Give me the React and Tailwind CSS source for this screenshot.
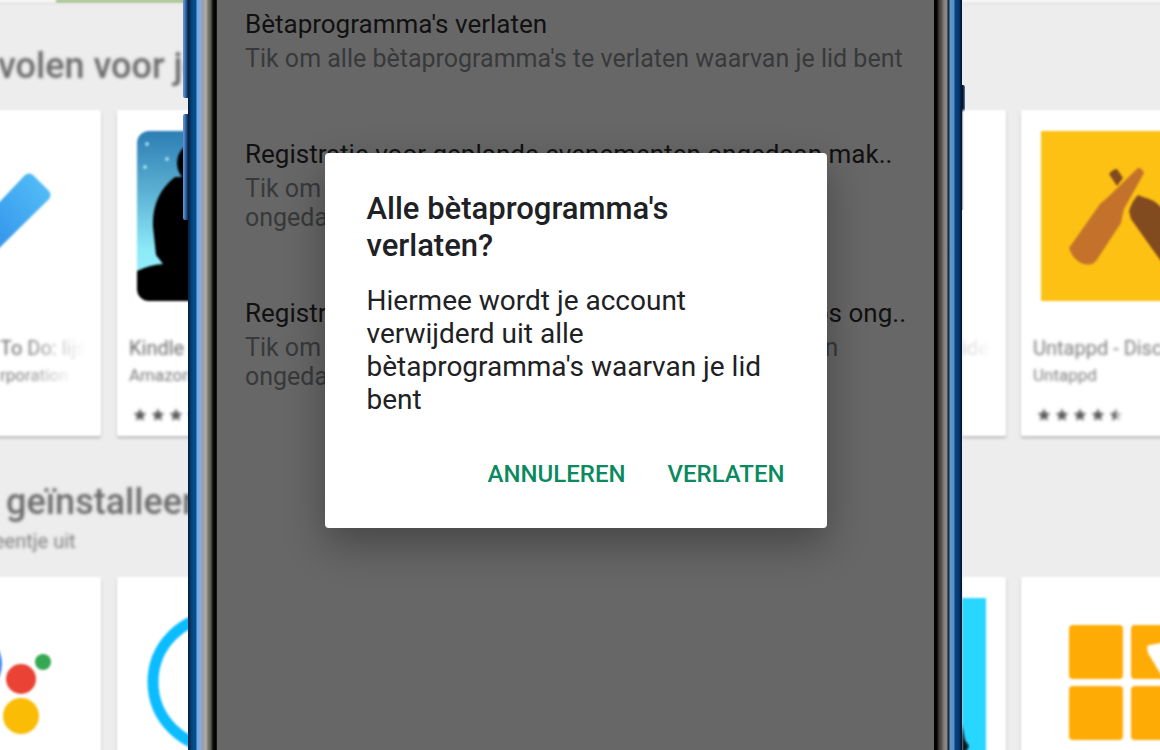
import React, { useState } from 'react';

const settings = [
  {
    id: 'beta',
    title: ["Bètaprogramma's verlaten"],
    text: [["Tik om alle bètaprogramma's te verlaten waarvan je lid bent"]],
  },
  {
    id: 'events',
    title: ['Registratie voor geplande evenementen ongedaan mak..'],
    text: [['Tik om alle registraties'], ['ongedaan te maken']],
  },
  {
    id: 'apps',
    title: ['Registratie', 'apps ong..'],
    text: [['Tik om je registratie voor automatische installaties en'], ['ongedaan te maken']],
  },
];

const Star = ({ half }) => (
  <svg viewBox="0 0 24 24" className="w-3.5 h-3.5" fill="#5c5c5c">
    {half ? (
      <>
        <path d="M12 1 8.7 8.2 1 9l5.8 5.2L5.2 22 12 18z" />
        <path d="M12 1l3.3 7.2L23 9l-5.8 5.2L18.8 22 12 18z" opacity="0.4" />
      </>
    ) : (
      <path d="M12 1l3.3 7.2L23 9l-5.8 5.2L18.8 22 12 18l-6.8 4 1.6-7.8L1 9l7.7-.8z" />
    )}
  </svg>
);

const Stars = ({ count, half }) => (
  <div className="flex gap-1 mt-5 px-4 blur-[1px]">
    {Array.from({ length: count }, (_, i) => (
      <Star key={i} />
    ))}
    {half && <Star half />}
  </div>
);

const TodoIcon = () => (
  <svg className="block w-[101px] h-[170px]" viewBox="0 0 101 170" overflow="visible">
    <defs>
      <linearGradient id="todo" x1="1" y1="0" x2="0" y2="1">
        <stop offset="0" stopColor="#55c2f8" />
        <stop offset="1" stopColor="#2b87e8" />
      </linearGradient>
    </defs>
    <path d="M-20 92 25 44q4-3 8 0l16 16q3 4 0 8L-20 136z" fill="url(#todo)" />
  </svg>
);

const KindleIcon = () => (
  <svg className="block w-[170px] h-[170px] rounded-xl ml-5" viewBox="0 0 170 170">
    <defs>
      <linearGradient id="sky" x1="0" y1="0" x2="0" y2="1">
        <stop offset="0" stopColor="#2d7db3" />
        <stop offset="0.35" stopColor="#5bb0d2" />
        <stop offset="0.7" stopColor="#8ceaf8" />
        <stop offset="1" stopColor="#a4f4ff" />
      </linearGradient>
    </defs>
    <rect width="170" height="170" fill="url(#sky)" />
    <g fill="#9ddcec">
      <circle cx="10" cy="13" r="2" />
      <circle cx="30" cy="28" r="2" />
      <circle cx="8" cy="36" r="2" />
    </g>
    <ellipse cx="56" cy="32" rx="16" ry="19" />
    <path d="M52 46H38C22 58 15 76 16 96l3 28 7 9Q12 134 0 140v30h170V46z" />
  </svg>
);

const AssistantIcon = () => (
  <svg className="block w-[101px] h-[170px]" viewBox="0 0 101 170" overflow="visible">
    <circle cx="-30" cy="66" r="32" fill="#4285f4" />
    <circle cx="21" cy="81" r="15" fill="#ea4335" />
    <circle cx="43" cy="64" r="8" fill="#34a853" />
    <circle cx="21" cy="118" r="18" fill="#fbbc05" />
  </svg>
);

const AlexaIcon = () => (
  <svg className="block w-[170px] h-[170px] ml-5" viewBox="0 0 170 170">
    <circle cx="82" cy="84" r="66" fill="none" stroke="#0bbcff" strokeWidth="11" />
  </svg>
);

const UntappdIcon = () => (
  <svg className="block w-[170px] h-[170px] ml-5" viewBox="0 0 170 170">
    <rect width="170" height="170" fill="#fdc113" />
    <path d="M68 43q4-5 8-5l6 9-6 8z" fill="#824a1f" />
    <path d="M97 64q-6 6-9 16l2 8 44 62 30-20-44-54q-8-8-18-10z" fill="#824a1f" />
    <path d="M97 37q4 0 6 5L83 78q-2 8-3 14l-25 38q-5 6-15 2-9-5-12-15l31-44 7-6z" fill="#c4722b" />
  </svg>
);

const TilesIcon = () => (
  <svg className="block w-[170px] h-[170px] ml-5" viewBox="0 0 170 170" fill="#ffab05">
    <rect x="28" y="27" width="54" height="54" rx="4" />
    <rect x="90" y="27" width="54" height="54" rx="4" />
    <rect x="28" y="88" width="54" height="54" rx="4" />
    <rect x="90" y="88" width="54" height="54" rx="4" />
    <path d="M106 50q0-3 3-3l20-4v38q-6 0-10-6l-12-20z" fill="#fff" />
  </svg>
);

const CyanIcon = () => (
  <svg className="block w-6 h-[170px]" viewBox="0 0 24 170">
    <rect width="24" height="170" fill="#28d7ff" />
    <path d="M0 126l3 16 4 6-3 6H0z" fill="#0a1a22" />
  </svg>
);

const Card = ({ className, children }) => (
  <div className={`bg-white pt-[21px] h-[326px] rounded-xs shadow-[0_2px_3px_rgba(0,0,0,0.22)] shrink-0 ${className}`}>
    {children}
  </div>
);

const StoreLeft = () => (
  <div className="overflow-hidden min-w-0">
    {/* starts a little outside the window so the blur doesn't fade at the edge */}
    <div className="blur-[1px] min-w-[326px] -ml-4">
      <div className="h-0.5 bg-white shadow-sm">
        <div className="h-full ml-[72px] bg-[#8bb866]" />
      </div>
      <div className="h-[108px] pt-[43px]">
        <h2 className="pl-3.5 text-[36px] leading-[42px] font-medium text-[#6c6c6c] whitespace-nowrap blur-[1px]">volen voor je</h2>
      </div>
      <div className="flex gap-4">
        <Card className="w-[117px] pl-4">
          <TodoIcon />
          <div className="blur-[1px]">
            <div className="mt-[33px] text-xl leading-7 whitespace-nowrap text-transparent bg-clip-text bg-linear-to-r from-[#666666] from-20% to-white to-85%">To Do: lijst</div>
            <div className="text-[17px] leading-[26px] whitespace-nowrap text-transparent bg-clip-text bg-linear-to-r from-[#777777] from-20% to-white to-75%">rporation</div>
          </div>
        </Card>
        <Card className="w-[210px]">
          <KindleIcon />
          <div className="blur-[1px]">
            <div className="mt-[33px] px-3 text-xl leading-7 text-[#6c6c6c]">Kindle</div>
            <div className="px-3 text-[17px] leading-[26px] text-[#777777]">Amazon</div>
          </div>
          <Stars count={4} />
        </Card>
      </div>
      <div className="h-[141px] pt-[45px] blur-[1px]">
        <h2 className="pl-[22px] text-[36px] leading-[42px] font-medium text-[#6c6c6c] whitespace-nowrap">geïnstalleerd</h2>
        <p className="pl-2.5 text-xl leading-7 mt-1 text-[#808080]">eentje uit</p>
      </div>
      <div className="flex gap-4">
        <Card className="w-[117px] pl-4">
          <AssistantIcon />
        </Card>
        <Card className="w-[210px]">
          <AlexaIcon />
        </Card>
      </div>
    </div>
  </div>
);

const StoreRight = () => (
  <div className="overflow-hidden min-w-0">
    <div className="blur-[1px] min-w-[270px]">
      <div className="h-0.5 bg-white shadow-sm" />
      <div className="h-[108px]" />
      <div className="flex gap-[15px]">
        <Card className="w-11">
          <div className="mt-[203px] text-xl leading-7 whitespace-nowrap text-transparent bg-clip-text bg-linear-to-r from-[#cccccc] to-white to-70% blur-[1px]">ide</div>
        </Card>
        <Card className="w-[210px]">
          <UntappdIcon />
          <div className="blur-[1px]">
            <div className="mt-[33px] px-3 text-xl leading-7 whitespace-nowrap text-[#7c7c7c]">Untappd - Discover</div>
            <div className="px-3 text-[17px] leading-[26px] text-[#808080]">Untappd</div>
          </div>
          <Stars count={4} half />
        </Card>
      </div>
      <div className="h-[141px]" />
      <div className="flex gap-[15px]">
        <Card className="w-11">
          <CyanIcon />
        </Card>
        <Card className="w-[210px]">
          <TilesIcon />
        </Card>
      </div>
    </div>
  </div>
);

const Line = ({ parts }) => (
  <span className="flex justify-between whitespace-nowrap">
    {parts.map(part => (
      <span key={part}>{part}</span>
    ))}
  </span>
);

const SettingsList = () => (
  <ul className="px-7 pt-[5px]">
    {settings.map(item => (
      <li key={item.id} className="mb-[62px]">
        <div className="text-[26px] leading-[39px] text-[#111111]">
          <Line parts={item.title} />
        </div>
        <div className="text-[25px] leading-[29px] text-[#38393b]">
          {item.text.map(parts => (
            <Line key={parts[0]} parts={parts} />
          ))}
        </div>
      </li>
    ))}
  </ul>
);

const LeaveDialog = ({ onClose }) => (
  <div
    role="dialog"
    aria-labelledby="leave-title"
    className="w-[502px] bg-white rounded-sm px-[42px] pt-[37px] pb-9 shadow-[0_16px_40px_rgba(0,0,0,0.32)]"
  >
    <h1 id="leave-title" className="text-[31px] leading-[37px] font-medium text-[#202124]">
      Alle bètaprogramma's
      <br />
      verlaten?
    </h1>
    <p className="mt-5 text-[28px] leading-[33px] text-[#202124]">
      Hiermee wordt je account
      <br />
      verwijderd uit alle
      <br />
      bètaprogramma's waarvan je lid
      <br />
      bent
    </p>
    <div className="flex justify-end gap-[42px] mt-10 text-[24px] leading-9 font-medium text-[#0b8a60]">
      <button type="button" onClick={onClose}>ANNULEREN</button>
      <button type="button" onClick={onClose}>VERLATEN</button>
    </div>
  </div>
);

const Phone = () => {
  const [open, setOpen] = useState(true);

  return (
    <div className="relative flex h-full">
      {/* volume and power keys */}
      <div className="absolute -left-[5px] -top-2 w-[6px] h-[106px] rounded-l-xs bg-linear-to-r from-[#5d8fc9] from-15% via-[#2a5c9c] to-[#04162e]" />
      <div className="absolute -left-[5px] top-[114px] w-[6px] h-[106px] rounded-l-xs bg-linear-to-r from-[#5d8fc9] from-15% via-[#2a5c9c] to-[#04162e]" />
      <div className="absolute -right-[3px] top-[85px] w-1 h-[125px] rounded-r-xs bg-linear-to-r from-[#06152f] from-50% to-[#5c88b8]" />

      <div className="w-[29px] shrink-0 bg-[linear-gradient(to_right,#03203f_0,#04305c_2px,#04477f_4px,#05508c_8px,#73a8e2_9px,#7fb0e8_13px,#9d9ba2_14px,#b0acac_18px,#7b7d70_20px,#55584c_23px,#0a0a0a_25px,#000_28px,#2a2a2a_29px)]" />
      <div className="relative flex-1 min-w-0 bg-[#676767]">
        <SettingsList />
        {open && (
          <div className="absolute inset-0 pt-[153px] flex justify-center items-start">
            <LeaveDialog onClose={() => setOpen(false)} />
          </div>
        )}
      </div>
      <div className="w-7 shrink-0 bg-[linear-gradient(to_right,#000_0,#050303_3px,#3e3a3a_5px,#5e5855_8px,#86847f_10px,#8a8884_13px,#122438_14px,#16304e_15px,#5f97cc_16px,#5a8fc6_20px,#06427f_21px,#05386f_25px,#041a38_27px,#04162e_28px)]" />
    </div>
  );
};

export default function App() {
  return (
    <div
      className="grid grid-cols-[188fr_774px_198fr] grid-rows-[100%] h-screen overflow-hidden bg-[#ededed]"
      style={{ fontFamily: 'Roboto, sans-serif' }}
    >
      <StoreLeft />
      <Phone />
      <StoreRight />
    </div>
  );
}
